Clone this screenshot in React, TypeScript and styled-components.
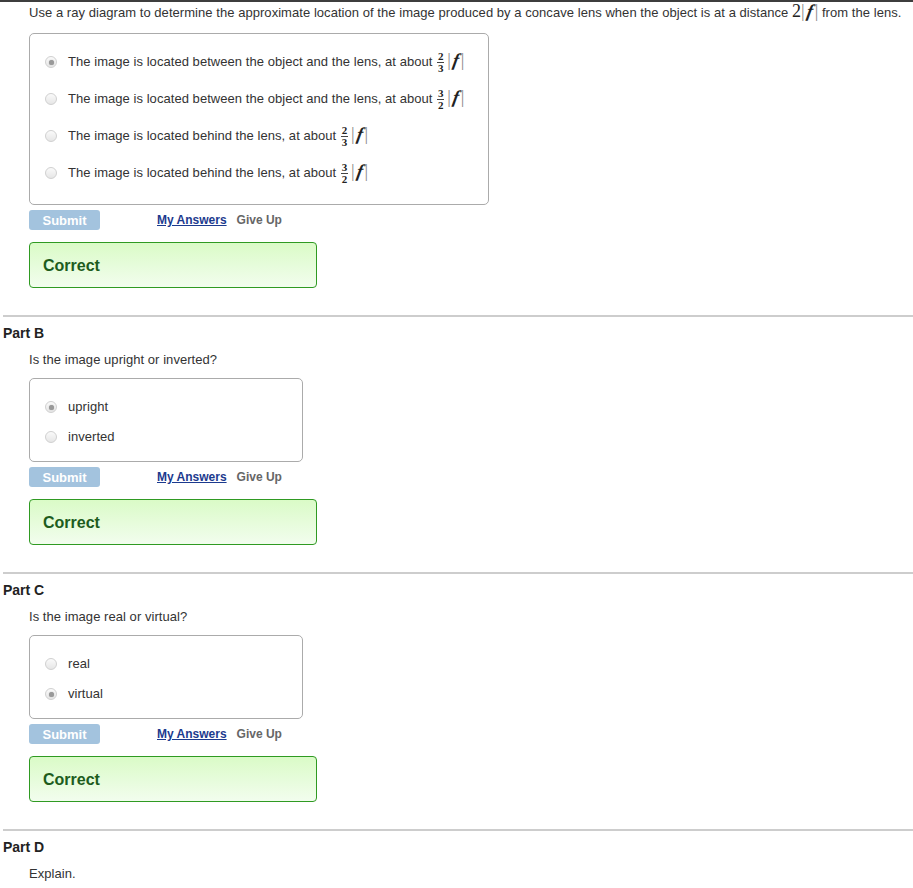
import React from 'react';
import styled, { createGlobalStyle, css } from 'styled-components';

const Global = createGlobalStyle`
  html, body { margin: 0; padding: 0; background: #fff; }
  body {
    font-family: "Liberation Sans", Arial, sans-serif;
    font-size: 13px;
    color: #333;
  }
`;

const Page = styled.div`
  border-top: 2px solid #3e3e3e;
  padding-left: 3px;
  width: 913px;
  box-sizing: border-box;
  padding-bottom: 12px;
`;

const Part = styled.section<{ $first?: boolean }>`
  ${(p) =>
    !p.$first &&
    css`
      border-top: 2px solid #cdcdcd;
      padding-top: 8px;
      margin-top: 27px;
    `}
`;

const Heading = styled.h3`
  margin: 0;
  font-size: 14px;
  font-weight: bold;
  line-height: 16px;
  color: #222;
`;

const Indent = styled.div`
  padding-left: 26px;
`;

const Question = styled.p<{ $mt: number; $mb: number }>`
  margin: ${(p) => p.$mt}px 0 ${(p) => p.$mb}px;
  line-height: 16px;
  white-space: nowrap;
  letter-spacing: 0.05px;
`;

const ChoiceBox = styled.div<{ $w: number }>`
  width: ${(p) => p.$w}px;
  box-sizing: border-box;
  border: 1px solid #ababab;
  border-radius: 5px;
  padding: 13px 0 9px;
`;

const Row = styled.div<{ $h: number }>`
  display: flex;
  align-items: flex-start;
  height: ${(p) => p.$h}px;
  padding: 7px 0 0 15px;
  box-sizing: border-box;
`;

const Radio = styled.span<{ $checked?: boolean }>`
  position: relative;
  flex: none;
  width: 12px;
  height: 12px;
  margin: 2px 11px 0 0;
  box-sizing: border-box;
  border-radius: 50%;
  border: 1px solid #d0d0d0;
  background: linear-gradient(#fafafa, #e6e6e6);
  ${(p) =>
    p.$checked &&
    css`
      &::after {
        content: '';
        position: absolute;
        left: 2.5px;
        top: 2.5px;
        width: 5px;
        height: 5px;
        border-radius: 50%;
        background: #999;
        box-shadow: 0 0 1px #999;
      }
    `}
`;

const Label = styled.span`
  line-height: 16px;
  white-space: nowrap;
  letter-spacing: 0.05px;
`;

const Frac = styled.span`
  display: inline-flex;
  flex-direction: column;
  align-items: center;
  vertical-align: middle;
  margin: -6px 3px -6px 1px;
  font-family: "Liberation Serif", "Times New Roman", serif;
  font-size: 11px;
  font-weight: bold;
  line-height: 9px;
  letter-spacing: 0;
  color: #222;
`;

const FracBar = styled.span`
  width: 7px;
  border-top: 1px solid #444;
  margin: 1px 0 1px;
`;

const MathAbs = styled.span`
  font-family: "Liberation Serif", "Times New Roman", serif;
  font-size: 18px;
  line-height: 0;
  letter-spacing: 0;
  color: #222;
`;

const Bar = styled.span`
  color: #888;
`;

const ItalicF = styled.em`
  display: inline-block;
  font-style: italic;
  font-weight: bold;
  transform: skewX(-10deg);
  margin: 0 2px 0 2px;
`;

const Actions = styled.div`
  display: flex;
  align-items: center;
  margin-top: 5px;
  height: 20px;
`;

const SubmitButton = styled.button`
  width: 71px;
  height: 20px;
  border: none;
  border-radius: 3px;
  background: #a3c3de;
  color: #fff;
  font-family: "Liberation Sans", Arial, sans-serif;
  font-size: 13px;
  font-weight: bold;
  padding: 0;
  cursor: default;
`;

const AnswersLink = styled.a`
  margin-left: 57px;
  font-size: 12px;
  font-weight: bold;
  color: #1c3a8e;
  text-decoration: underline;
`;

const GiveUp = styled.span`
  margin-left: 10px;
  font-size: 12px;
  font-weight: bold;
  color: #666;
`;

const Feedback = styled.div`
  margin-top: 12px;
  width: 288px;
  height: 46px;
  box-sizing: border-box;
  border: 1px solid #2f9a22;
  border-radius: 4px;
  background: linear-gradient(#dafbc7, #f2fdee);
  padding: 13px 13px 0;
  font-size: 16px;
  font-weight: bold;
  line-height: 20px;
  color: #1d5c1d;
`;

const TwoDigit = styled.span`
  font-family: "Liberation Serif", "Times New Roman", serif;
  font-size: 18px;
  line-height: 0;
  letter-spacing: 0;
  color: #222;
`;

const AbsF = () => (
  <MathAbs>
    <Bar>|</Bar>
    <ItalicF>f</ItalicF>
    <Bar>|</Bar>
  </MathAbs>
);

const Fraction = ({ n, d }: { n: string; d: string }) => (
  <Frac>
    <span>{n}</span>
    <FracBar />
    <span>{d}</span>
  </Frac>
);

type Choice = { text: string; frac?: [string, string]; checked?: boolean };

const Choices = ({ width, items }: { width: number; items: Choice[] }) => (
  <ChoiceBox $w={width}>
    {items.map((c, i) => (
      <Row key={i} $h={c.frac ? 37 : 30}>
        <Radio $checked={c.checked} />
        <Label>
          {c.text}
          {c.frac && (
            <>
              {' '}
              <Fraction n={c.frac[0]} d={c.frac[1]} />
              <AbsF />
            </>
          )}
        </Label>
      </Row>
    ))}
  </ChoiceBox>
);

const ActionBar = () => (
  <>
    <Actions>
      <SubmitButton>Submit</SubmitButton>
      <AnswersLink href="#">My Answers</AnswersLink>
      <GiveUp>Give Up</GiveUp>
    </Actions>
    <Feedback>Correct</Feedback>
  </>
);

export default function App() {
  return (
    <>
      <Global />
      <Page>
        <Part $first>
          <Indent>
            <Question $mt={3} $mb={12}>
              Use a ray diagram to determine the approximate location of the image produced by a concave lens when the object is at a distance <TwoDigit>2</TwoDigit>
              <AbsF /> from the lens.
            </Question>
            <Choices
              width={460}
              items={[
                { text: 'The image is located between the object and the lens, at about', frac: ['2', '3'], checked: true },
                { text: 'The image is located between the object and the lens, at about', frac: ['3', '2'] },
                { text: 'The image is located behind the lens, at about', frac: ['2', '3'] },
                { text: 'The image is located behind the lens, at about', frac: ['3', '2'] },
              ]}
            />
            <ActionBar />
          </Indent>
        </Part>

        <Part>
          <Heading>Part B</Heading>
          <Indent>
            <Question $mt={11} $mb={10}>Is the image upright or inverted?</Question>
            <Choices
              width={274}
              items={[{ text: 'upright', checked: true }, { text: 'inverted' }]}
            />
            <ActionBar />
          </Indent>
        </Part>

        <Part>
          <Heading>Part C</Heading>
          <Indent>
            <Question $mt={11} $mb={10}>Is the image real or virtual?</Question>
            <Choices
              width={274}
              items={[{ text: 'real' }, { text: 'virtual', checked: true }]}
            />
            <ActionBar />
          </Indent>
        </Part>

        <Part>
          <Heading>Part D</Heading>
          <Indent>
            <Question $mt={11} $mb={0}>Explain.</Question>
          </Indent>
        </Part>
      </Page>
    </>
  );
}
